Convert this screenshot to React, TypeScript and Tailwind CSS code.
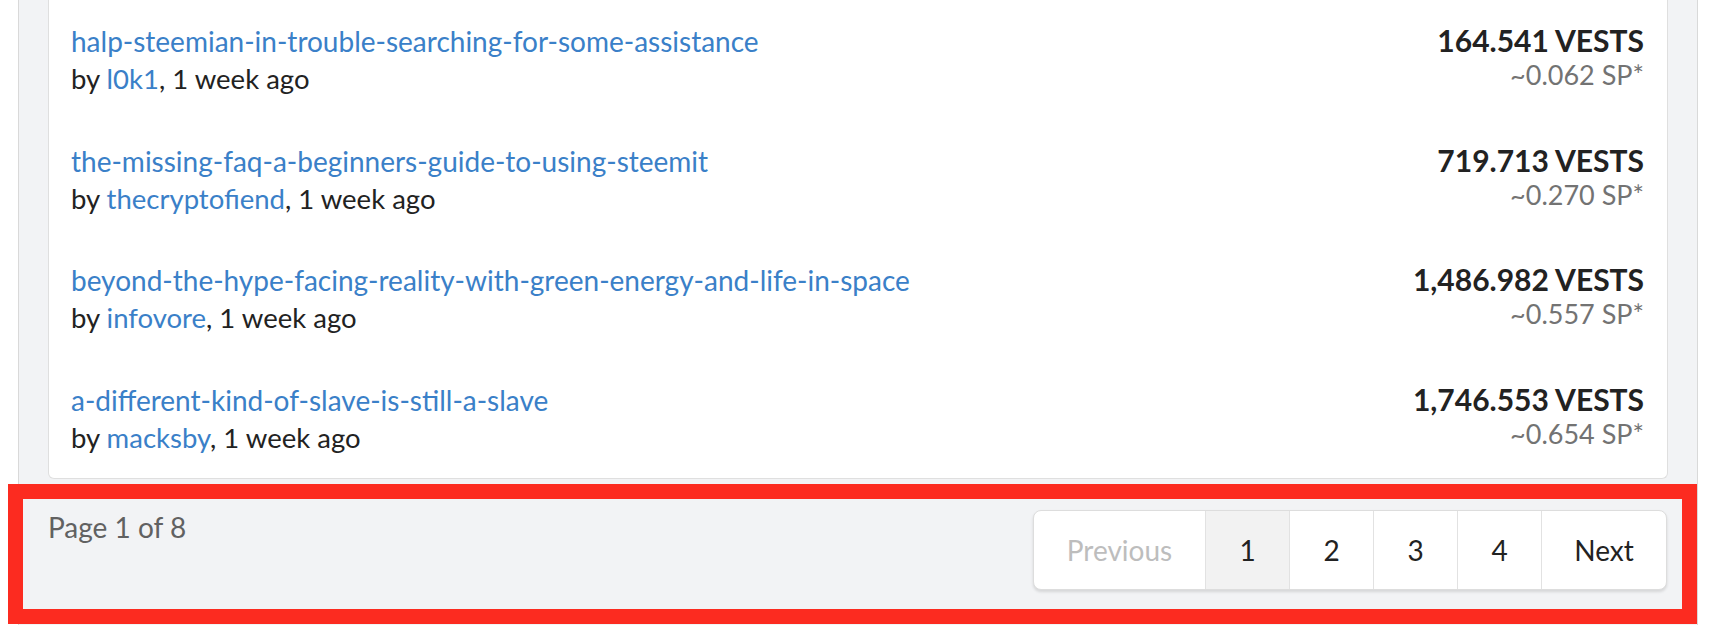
import React from "react";

type Post = {
  slug: string;
  author: string;
  vests: string;
  sp: string;
};

const posts: Post[] = [
  {
    slug: "halp-steemian-in-trouble-searching-for-some-assistance",
    author: "l0k1",
    vests: "164.541 VESTS",
    sp: "~0.062 SP*",
  },
  {
    slug: "the-missing-faq-a-beginners-guide-to-using-steemit",
    author: "thecryptofiend",
    vests: "719.713 VESTS",
    sp: "~0.270 SP*",
  },
  {
    slug: "beyond-the-hype-facing-reality-with-green-energy-and-life-in-space",
    author: "infovore",
    vests: "1,486.982 VESTS",
    sp: "~0.557 SP*",
  },
  {
    slug: "a-different-kind-of-slave-is-still-a-slave",
    author: "macksby",
    vests: "1,746.553 VESTS",
    sp: "~0.654 SP*",
  },
];

function PostRow({ post }: { post: Post }) {
  return (
    <div className="flex justify-between items-start pl-[22px] pr-[23px] pt-[22px] pb-[21.5px]">
      <div className="flex flex-col">
        <a className="text-[28px] leading-[38px] text-[#3a80c8]" href="#">
          {post.slug}
        </a>
        <div className="text-[27.5px] leading-[38px] text-[#222]">
          by <a className="text-[#3a80c8]">{post.author}</a>, 1 week ago
        </div>
      </div>
      <div className="flex flex-col items-end">
        <div className="text-[30px] leading-[36px] font-bold text-[#222]">
          {post.vests}
        </div>
        <div className="text-[27px] leading-[33px] text-[#737373]">
          {post.sp}
        </div>
      </div>
    </div>
  );
}

function Pagination() {
  // widths measured off the screenshot
  return (
    <div className="flex h-[80px] border border-[#dddddd] rounded-[8px] bg-white shadow-[0_2px_3px_rgba(0,0,0,0.12)] overflow-hidden text-[28px]">
      <div className="w-[171px] flex items-center justify-center text-[#bdbdbd]">
        Previous
      </div>
      <div className="w-[84px] flex items-center justify-center border-l border-[#e2e2e2] bg-[#f2f2f2] text-[#222]">
        1
      </div>
      <div className="w-[84px] flex items-center justify-center border-l border-[#e2e2e2] text-[#222]">
        2
      </div>
      <div className="w-[84px] flex items-center justify-center border-l border-[#e2e2e2] text-[#222]">
        3
      </div>
      <div className="w-[84px] flex items-center justify-center border-l border-[#e2e2e2] text-[#222]">
        4
      </div>
      <div className="w-[125px] flex items-center justify-center border-l border-[#e2e2e2] text-[#222]">
        Next
      </div>
    </div>
  );
}

export default function App() {
  return (
    <div
      className="w-[1714px] h-[636px] bg-white overflow-hidden"
      style={{ fontFamily: "Lato, 'Open Sans', sans-serif" }}
    >
      <div className="ml-[18px] w-[1680px] h-[625px] border-x border-[#d9d9d9] bg-[#f2f3f5] flex flex-col">
        {/* list card, top is scrolled off */}
        <div className="mx-[29px] bg-white border-x border-b border-[#dfdfdf] rounded-b-[6px]">
          {posts.map((p) => (
            <PostRow key={p.slug} post={p} />
          ))}
        </div>

        {/* footer, highlighted in red */}
        <div className="mt-[5px] -ml-[11px] h-[140px] border-[15px] border-[#fc2b20] flex justify-between items-start pl-[25px] pr-[15px] pt-[11px]">
          <div className="text-[28px] leading-[32px] text-[#616161] mt-[1px]">
            Page 1 of 8
          </div>
          <Pagination />
        </div>
      </div>
    </div>
  );
}
